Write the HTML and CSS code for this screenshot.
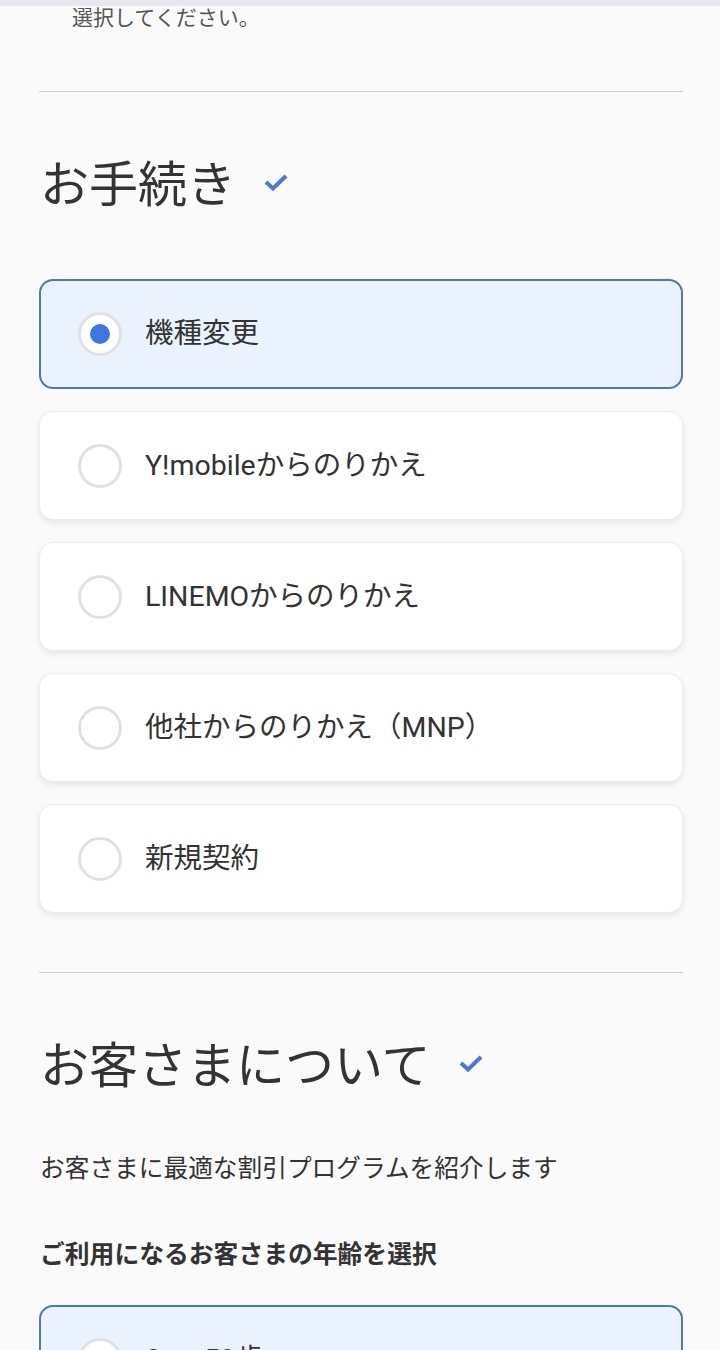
FILE: index.html
```html
<!DOCTYPE html>
<html lang="ja">
<head>
<meta charset="utf-8">
<title>お手続き</title>
<link rel="stylesheet" href="styles.css">
</head>
<body>
<div class="topbar"></div>
<main class="page">
  <p class="intro">選択してください。</p>
  <hr class="divider">
  <section class="section">
    <h2 class="heading">お手続き<svg class="check" viewBox="0 0 26 20" width="26" height="20"><path d="M3 10 L10 16.5 L23 4" fill="none" stroke="#4a78d2" stroke-width="4" stroke-linecap="butt" stroke-linejoin="miter"/></svg></h2>
    <div class="options">
      <label class="option selected"><span class="radio"><span class="dot"></span></span><span class="label">機種変更</span></label>
      <label class="option"><span class="radio"></span><span class="label">Y!mobileからのりかえ</span></label>
      <label class="option"><span class="radio"></span><span class="label">LINEMOからのりかえ</span></label>
      <label class="option"><span class="radio"></span><span class="label">他社からのりかえ（MNP）</span></label>
      <label class="option"><span class="radio"></span><span class="label">新規契約</span></label>
    </div>
  </section>
  <hr class="divider second">
  <section class="section">
    <h2 class="heading">お客さまについて<svg class="check" viewBox="0 0 26 20" width="26" height="20"><path d="M3 10 L10 16.5 L23 4" fill="none" stroke="#4a78d2" stroke-width="4" stroke-linecap="butt" stroke-linejoin="miter"/></svg></h2>
    <p class="desc">お客さまに最適な割引プログラムを紹介します</p>
    <p class="sub">ご利用になるお客さまの年齢を選択</p>
    <div class="options age">
      <label class="option selected"><span class="radio"></span><span class="label">0 〜 59歳</span></label>
    </div>
  </section>
</main>
</body>
</html>
```

FILE: styles.css
```css
* { box-sizing: border-box; }
html, body { margin: 0; padding: 0; }
body {
  background: #fafafa;
  font-family: Roboto, "Noto Sans CJK JP", sans-serif;
  color: #333;
  overflow: hidden;
}
.topbar {
  height: 6px;
  background: #e6e8ee;
}
.page {
  padding: 0 37px 0 39px;
}
.intro {
  margin: 0 0 0 33px;
  font-size: 21px;
  line-height: 24px;
  color: #555;
}
.divider {
  margin: 61px 0 0;
  border: 0;
  border-top: 1px solid #cfcfd2;
  height: 0;
}
.divider.second { margin-top: 59px; }
.heading {
  margin: 60px 0 0 1px;
  font-size: 49px;
  line-height: 67px;
  font-weight: 400;
  color: #333;
  display: flex;
  align-items: center;
}
.check {
  margin-left: 27px;
  margin-top: -8px;
}
.options {
  margin-top: 60px;
  display: flex;
  flex-direction: column;
  gap: 22px;
}
.option {
  height: 109px;
  background: #fff;
  border: 1px solid #ececec;
  border-radius: 14px;
  box-shadow: 0 3px 6px rgba(0, 0, 0, 0.08);
  display: flex;
  align-items: center;
  padding-left: 38px;
}
.option.selected {
  height: 110px;
  background: #eaf2fe;
  border: 2px solid #4d76bd;
  box-shadow: none;
  padding-left: 37px;
}
.radio {
  width: 44px;
  height: 44px;
  border-radius: 50%;
  border: 3px solid #dfe1e3;
  background: #fff;
  display: flex;
  align-items: center;
  justify-content: center;
  flex: none;
}
.dot {
  width: 20px;
  height: 20px;
  border-radius: 50%;
  background: #3f76e0;
}
.label {
  margin-left: 23px;
  font-size: 28.5px;
  line-height: 36px;
  color: #333;
}
.desc {
  margin: 51px 0 0 1px;
  font-size: 24.7px;
  line-height: 36px;
  color: #333;
}
.sub {
  margin: 50px 0 0 1px;
  font-size: 24.8px;
  line-height: 36px;
  font-weight: 700;
  color: #333;
}
.options.age { margin-top: 32px; }
```
